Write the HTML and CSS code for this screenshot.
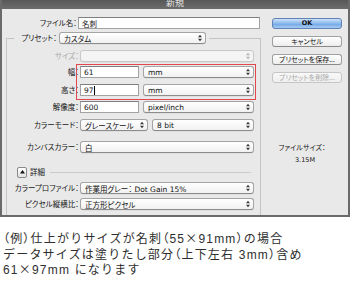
FILE: index.html
```html
<!DOCTYPE html>
<html lang="ja">
<head>
<meta charset="utf-8">
<link rel="stylesheet" href="styles.css">
</head>
<body>
<div class="dialog">
  <div class="titlebar"><span class="title">新規</span></div>
  <div class="dbody">
    <div class="main">
      <div class="row namerow">
        <span class="lbl">ファイル名：</span>
        <div class="field wide">名刺</div>
      </div>
      <fieldset class="group">
        <legend class="legend">
          <span class="lbl plbl">プリセット：</span>
          <div class="popup preset"><span>カスタム</span><svg class="arr" viewBox="0 0 4 8"><path d="M0 3.2L2 0.8L4 3.2Z M0 4.8L2 7.2L4 4.8Z"/></svg></div>
        </legend>
        <div class="row frow r-size">
          <span class="lbl dis">サイズ：</span>
          <div class="popup full disabled"><span></span><svg class="arr" viewBox="0 0 4 8"><path d="M0 3.2L2 0.8L4 3.2Z M0 4.8L2 7.2L4 4.8Z"/></svg></div>
        </div>
        <div class="redwrap">
          <div class="row frow">
            <span class="lbl">幅：</span>
            <div class="field num">61</div>
            <div class="popup unit"><span>mm</span><svg class="arr" viewBox="0 0 4 8"><path d="M0 3.2L2 0.8L4 3.2Z M0 4.8L2 7.2L4 4.8Z"/></svg></div>
          </div>
          <div class="row frow r-h">
            <span class="lbl">高さ：</span>
            <div class="field num">97<span class="caret"></span></div>
            <div class="popup unit"><span>mm</span><svg class="arr" viewBox="0 0 4 8"><path d="M0 3.2L2 0.8L4 3.2Z M0 4.8L2 7.2L4 4.8Z"/></svg></div>
          </div>
          <div class="redbox"></div>
        </div>
        <div class="row frow r-res">
          <span class="lbl">解像度：</span>
          <div class="field num">600</div>
          <div class="popup unit"><span>pixel/inch</span><svg class="arr" viewBox="0 0 4 8"><path d="M0 3.2L2 0.8L4 3.2Z M0 4.8L2 7.2L4 4.8Z"/></svg></div>
        </div>
        <div class="row frow r-mode">
          <span class="lbl">カラーモード：</span>
          <div class="popup mode"><span>グレースケール</span><svg class="arr" viewBox="0 0 4 8"><path d="M0 3.2L2 0.8L4 3.2Z M0 4.8L2 7.2L4 4.8Z"/></svg></div>
          <div class="popup bits"><span>8 bit</span><svg class="arr" viewBox="0 0 4 8"><path d="M0 3.2L2 0.8L4 3.2Z M0 4.8L2 7.2L4 4.8Z"/></svg></div>
        </div>
        <div class="row frow r-canvas">
          <span class="lbl">カンバスカラー：</span>
          <div class="popup full"><span>白</span><svg class="arr" viewBox="0 0 4 8"><path d="M0 3.2L2 0.8L4 3.2Z M0 4.8L2 7.2L4 4.8Z"/></svg></div>
        </div>
        <div class="row r-detail">
          <div class="disc"><svg viewBox="0 0 6 4"><path d="M0 4L3 0L6 4Z"/></svg></div>
          <span class="dlabel">詳細</span>
          <div class="hline"></div>
        </div>
        <div class="row frow r-prof">
          <span class="lbl">カラープロファイル：</span>
          <div class="popup full"><span>作業用グレー： Dot Gain 15%</span><svg class="arr" viewBox="0 0 4 8"><path d="M0 3.2L2 0.8L4 3.2Z M0 4.8L2 7.2L4 4.8Z"/></svg></div>
        </div>
        <div class="row frow r-aspect">
          <span class="lbl">ピクセル縦横比：</span>
          <div class="popup full"><span>正方形ピクセル</span><svg class="arr" viewBox="0 0 4 8"><path d="M0 3.2L2 0.8L4 3.2Z M0 4.8L2 7.2L4 4.8Z"/></svg></div>
        </div>
      </fieldset>
    </div>
    <div class="side">
      <div class="btn ok">OK</div>
      <div class="btn">キャンセル</div>
      <div class="btn">プリセットを保存...</div>
      <div class="btn dis">プリセットを削除...</div>
      <div class="fsize">
        <div class="fs-label">ファイルサイズ：</div>
        <div class="fs-value">3.15M</div>
      </div>
    </div>
  </div>
</div>
<p class="caption"><span class="p">（</span>例<span class="p">）</span>仕上がりサイズが名刺<span class="p">（</span>55<span class="x">×</span>91mm<span class="p">）</span>の場合<br>データサイズは塗りたし部分<span class="p">（</span>上下左右 3mm<span class="p">）</span>含め<br>61<span class="x">×</span>97mm になります</p>
</body>
</html>
```

FILE: styles.css
```css
* { box-sizing: border-box; }
html, body { margin: 0; padding: 0; background: #fff; }
body {
  width: 350px;
  height: 284px;
  overflow: hidden;
  font-family: "Noto Sans CJK JP", sans-serif;
}
.dialog {
  width: 350px;
  height: 217px;
  background: #e9e9e9;
  border: 2px solid #6a6a6a;
  border-top: 0;
  display: flex;
  flex-direction: column;
  color: #161616;
  font-size: 7.5px;
  font-feature-settings: "palt";
}
.titlebar {
  height: 9px;
  flex: none;
  background: linear-gradient(#585858, #6c6c6c);
  text-align: center;
  overflow: hidden;
  color: #e4e4e4;
  font-size: 9px;
  line-height: 9px;
}
.title { display: block; margin-top: -2px; }
.dbody { flex: 1; display: flex; min-height: 0; }
.main { width: 260px; display: flex; flex-direction: column; }
.side {
  width: 70px;
  margin-left: 10px;
  padding-top: 9px;
  display: flex;
  flex-direction: column;
  gap: 7px;
}
.row { display: flex; align-items: center; height: 12px; flex: none; }
.lbl { text-align: right; white-space: nowrap; margin-right: 1px; line-height: 12px; flex: none; }
.lbl.dis { color: #a8a8a8; }
.namerow { margin-top: 8px; }
.namerow .lbl { width: 75px; }
.frow .lbl { width: 72px; }

.group {
  margin: 3px 0 0 4px;
  width: 255px;
  border: 1px solid #c4c4c4;
  border-bottom: 0;
  padding: 0;
  flex: 1;
  min-width: 0;
}
.legend {
  margin-left: 7px;
  padding: 0 3px 0 1px;
  display: flex;
  align-items: center;
  height: 12px;
}
.plbl { width: 42px; }

.field {
  height: 12px;
  background: #fff;
  border: 1px solid #a2a2a2;
  border-top-color: #7e7e7e;
  padding-left: 3px;
  display: flex;
  align-items: center;
  font-size: 7.5px;
  font-family: "DejaVu Sans", "Noto Sans CJK JP", sans-serif;
  color: #111;
}
.field.wide { width: 182px; font-family: "Noto Sans CJK JP", sans-serif; }
.field.num { width: 59px; margin-right: 4px; }
.caret { width: 1px; height: 9px; background: #000; margin-left: 0.5px; }

.popup {
  height: 12px;
  border: 1px solid #a4a4a4;
  border-bottom-color: #8c8c8c;
  border-radius: 3px;
  background: linear-gradient(#ffffff, #f1f1f1);
  padding-left: 4px;
  display: flex;
  align-items: center;
  font-size: 7.5px;
  font-family: "DejaVu Sans", "Noto Sans CJK JP", sans-serif;
  color: #111;
  box-shadow: 0 0.5px 0 rgba(0,0,0,0.08);
}
.popup span { white-space: nowrap; font-feature-settings: "palt"; }
.arr { width: 4px; height: 8px; margin-left: auto; margin-right: 3px; fill: #3a3a3a; flex: none; }
.popup.disabled { background: #f4f4f4; border-color: #c8c8c8; }
.popup.disabled .arr { fill: #b4b4b4; }
.preset { width: 147px; margin-left: 1px; }
.full { width: 174px; }
.unit { width: 111px; }
.mode { width: 68px; margin-right: 4px; }
.bits { width: 102px; }

.r-size { margin-top: 6px; }
.redwrap { position: relative; margin-top: 4px; }
.r-h { margin-top: 6px; }
.redbox {
  position: absolute;
  left: 69px;
  top: -2px;
  width: 180px;
  height: 36px;
  border: 1.5px solid #e2474e;
}
.r-res { margin-top: 5px; }
.r-mode { margin-top: 6px; }
.r-canvas { margin-top: 10px; }
.r-detail { margin-top: 13px; }
.r-prof { margin-top: 4px; }
.r-aspect { margin-top: 4px; }

.disc {
  width: 10px;
  height: 11px;
  margin-left: 10px;
  border: 1px solid #8a8a8a;
  border-radius: 2px;
  background: linear-gradient(#ffffff, #e2e2e2);
  display: flex;
  align-items: center;
  justify-content: center;
}
.disc svg { width: 5px; height: 3.5px; fill: #111; }
.dlabel { margin-left: 3px; line-height: 12px; }
.hline { flex: 1; height: 1px; background: #cbcbcb; margin-left: 5px; margin-right: 9px; }

.btn {
  height: 11px;
  border: 1px solid #a0a0a0;
  border-bottom-color: #8a8a8a;
  border-radius: 3px;
  background: linear-gradient(#ffffff, #ededed);
  text-align: center;
  font-size: 7px;
  line-height: 9px;
  white-space: nowrap;
  color: #111;
}
.btn.ok {
  background: linear-gradient(#cfe3f8, #88b8ec 50%, #73a8e6 55%, #a6cbf2);
  border-color: #5f83b8;
  font-weight: bold;
  font-family: "DejaVu Sans", sans-serif;
  font-size: 6.5px;
}
.btn.dis { color: #a9a9a9; border-color: #c6c6c6; background: linear-gradient(#f8f8f8, #efefef); }

.fsize { margin-top: 52px; text-align: center; margin-right: 10px; }
.fs-label { line-height: 10px; font-size: 7px; }
.fs-value { line-height: 10px; margin-top: 3px; font-family: "DejaVu Sans", sans-serif; font-size: 6.5px; margin-left: 6px; }

.caption {
  margin: 14px 0 0 3px;
  font-family: "Liberation Sans", "Noto Sans CJK JP", sans-serif;
  font-size: 12px;
  line-height: 14.5px;
  letter-spacing: 1.2px;
  color: #2e2e2e;
  white-space: nowrap;
}
.caption .p { font-family: "Noto Sans CJK JP", sans-serif; font-feature-settings: "palt"; }
.caption .x { font-family: "Noto Sans CJK JP", sans-serif; }
```
